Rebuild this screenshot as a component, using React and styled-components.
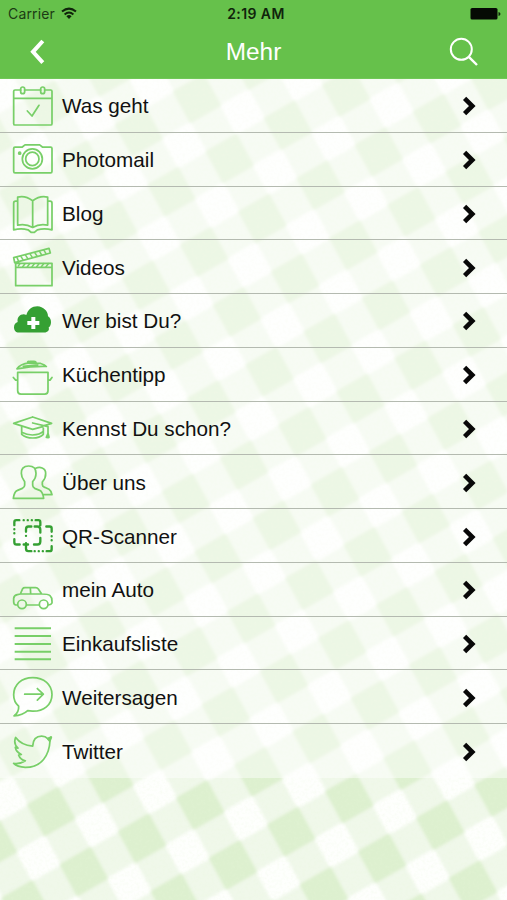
import React from "react";
import styled, { createGlobalStyle } from "styled-components";

const GlobalStyle = createGlobalStyle`
  * { box-sizing: border-box; }
  html, body { margin: 0; padding: 0; }
  body { background: #fff; overflow: hidden; }
`;

const Screen = styled.div`
  position: relative;
  isolation: isolate;
  display: flex;
  flex-direction: column;
  width: 507px;
  height: 900px;
  overflow: hidden;
  color: #111;
  font-family: "Liberation Sans", Arial, sans-serif;
`;

const Backdrop = styled.svg`
  position: absolute;
  inset: 0;
  z-index: -1;
  width: 507px;
  height: 900px;
`;

const Header = styled.header`
  flex: none;
  height: 79px;
  background: #66c14b;
  border-bottom: 1px solid #70c857;
`;

const StatusBar = styled.div`
  display: grid;
  grid-template-columns: 1fr auto 1fr;
  align-items: center;
  height: 27px;
  padding: 0 6px 0 8px;
  font-family: Inter, sans-serif;
  font-size: 14px;
  line-height: 27px;
`;

const Carrier = styled.span`
  display: flex;
  align-items: center;
  gap: 6px;
  color: #1c3b14;
  letter-spacing: 0.15px;
`;

const Clock = styled.span`
  padding-left: 3px;
  font-weight: 600;
  font-size: 14px;
  color: #10240b;
  letter-spacing: 0.4px;
`;

const BatteryIcon = styled.svg`
  justify-self: end;
  width: 31px;
  height: 14px;
`;

const WifiIcon = styled.svg`
  width: 16px;
  height: 13px;
`;

const NavBar = styled.nav`
  display: grid;
  grid-template-columns: 76px 1fr 76px;
  align-items: center;
  height: 50px;
`;

const NavButton = styled.button`
  display: flex;
  justify-content: center;
  align-items: center;
  height: 50px;
  padding: 0;
  border: 0;
  background: none;
  color: #fff;

  svg {
    width: 76px;
    height: 50px;
    fill: none;
    stroke: currentColor;
  }
`;

const Title = styled.h1`
  margin: 0;
  color: #fff;
  font-size: 24.4px;
  font-weight: 400;
  line-height: 50px;
  text-align: center;
`;

const List = styled.ul`
  display: grid;
  grid-template-rows: repeat(13, 53.77px);
  flex: none;
  height: 699px;
  margin: 0;
  padding: 0;
  list-style: none;
  background: rgba(255, 255, 255, 0.46);
`;

const Row = styled.li`
  display: grid;
  grid-template-columns: 45px 1fr 14px;
  column-gap: 7px;
  align-items: center;
  padding: 0 31px 0 10px;
  border-bottom: ${(p) => (p.$last ? "0" : "1px solid #b4bab0")};
`;

const RowIcon = styled.svg`
  display: block;
  width: 45px;
  height: 53.77px;
  fill: none;
  stroke: #78cf68;
  stroke-width: 5.2;
  stroke-linecap: round;
  stroke-linejoin: round;
`;

const Label = styled.span`
  padding-top: 1px;
  font-size: 20.7px;
  line-height: 26px;
  white-space: nowrap;
`;

const Chevron = styled.svg`
  width: 14px;
  height: 20px;
  margin-top: 1px;
  fill: none;
  stroke: #080808;
  stroke-width: 4.6;
`;

const DARK = "#35a033";

const items = [
  {
    label: "Was geht",
    top: 3,
    art: (
      <>
        <path d="M62 36H45Q41 36 41 40V137Q41 141 45 141H152Q156 141 156 137V40Q156 36 152 36H136M74 36H122M41 61H156" />
        <rect x="62" y="27" width="12" height="20" rx="6" />
        <rect x="122" y="27" width="12" height="20" rx="6" />
        <path d="M82 99L96 114L117 82" />
      </>
    ),
  },
  {
    label: "Photomail",
    top: 164.3,
    art: (
      <>
        <path d="M45 207H66L75 200H119L128 207H152Q156 207 156 211V279Q156 284 152 284H45Q41 284 41 279V211Q41 207 45 207Z" />
        <circle cx="97" cy="242" r="30" />
        <circle cx="97" cy="242" r="20" />
        <circle cx="59" cy="225" r="3" fill="#78cc69" />
      </>
    ),
  },
  {
    label: "Blog",
    top: 325.6,
    art: (
      <path d="M98 367Q76 350 53 356V440Q78 435 98 447Q118 435 143 440V356Q120 350 98 367V447M53 368H47Q41 368 41 374V454Q64 449 84 454L94 462H103L112 454Q133 449 156 454V374Q156 368 150 368H143" />
    ),
  },
  {
    label: "Videos",
    top: 1,
    art: (
      <>
        <path d="M47 83H156V138H47ZM47 83V71H156V83M44 69L41 54L147 26L151 40Z" />
        <path
          strokeWidth="4.5"
          d="M55 79L60 72M68 81L75 72M82 81L89 72M96 81L103 72M110 81L117 72M124 81L131 72M138 81L145 72M55 63L51 54M69 60L63 51M83 56L77 47M97 53L91 44M111 49L105 40M125 46L119 36M138 42L132 32"
        />
      </>
    ),
  },
  {
    label: "Wer bist Du?",
    top: 162.3,
    art: (
      <>
        <path
          fill={DARK}
          stroke="none"
          d="M57 278C47 278 42 271 42 262C42 253 47 248 53 246C50 231 64 219 79 225C84 208 96 199 112 199C130 200 144 213 144 229C150 233 153 239 153 247C153 254 150 260 146 263C149 271 143 278 133 278Z"
        />
        <path stroke="#fff" strokeWidth="12" strokeLinecap="butt" d="M100 231V267M82 249H118" />
      </>
    ),
  },
  {
    label: "Küchentipp",
    top: 323.6,
    art: (
      <path d="M53 397H144V452Q144 462 134 462H63Q53 462 53 452ZM53 420H47L40 412M144 420H150L156 412M51 386Q60 371 88 368L122 370Q135 374 139 379Q96 378 51 386M83 368Q82 362 90 364H102Q109 364 108 370M70 379L113 374" />
    ),
  },
  {
    label: "Kennst Du schon?",
    top: 5,
    art: (
      <path d="M98 50L155 69L133 76M128 79L98 87L41 69L98 50M65 79V102Q78 113 98 113Q119 113 130 102V83M65 96Q81 104 97 104Q120 103 130 93M98 68L144 79V112M139 111L144 99L147 111Z" />
    ),
  },
  {
    label: "Über uns",
    top: 166,
    art: (
      <path d="M86 199C70 199 63 209 64 221C64 234 69 239 74 246V257Q74 263 67 266L51 273Q43 276 40 296H131Q128 276 119 272L104 266Q98 262 98 257V246C106 238 108 230 108 221C108 208 101 199 86 199M107 206C119 200 137 204 137 221C138 234 133 240 127 247V255Q127 260 134 263L147 269Q153 273 156 285H130" />
    ),
  },
  {
    label: "QR-Scanner",
    top: 327.5,
    art: (
      <g stroke={DARK} strokeWidth="7">
        <path d="M43 376V367Q43 361 49 361H58M107 361H115Q121 361 121 367V376M43 418V427Q43 434 50 434H59M78 396V388Q78 380 85 380H94M104 380H112Q121 380 121 390V398M102 434H112Q121 434 121 425V414M139 380H149Q155 380 155 386V396M155 439V448Q155 454 149 454H140M78 430V447Q78 454 85 454H94M71 434H84" />
        <path strokeDasharray="0.2 12" d="M71 361H97M43 388V408M155 409V430M104 454H132M78 408V420" />
      </g>
    ),
  },
  {
    label: "mein Auto",
    top: 9,
    art: (
      <>
        <path d="M51 135H47Q41 133 41 125V115Q42 106 52 104L61 102L68 86Q70 83 75 83H107Q112 83 115 87L125 102Q144 102 150 107Q156 112 156 124V129Q154 134 145 135M80 135H116M61 102H125M91 84L92 101" />
        <circle cx="66" cy="133" r="13" />
        <circle cx="131" cy="133" r="13" />
      </>
    ),
  },
  {
    label: "Einkaufsliste",
    top: 170,
    art: <path strokeWidth="6" strokeLinecap="butt" d="M44 204H153M44 227H153M44 251H153M44 274H153M44 297H153" />,
  },
  {
    label: "Weitersagen",
    top: 7.4,
    art: (
      <path d="M42 145Q57 135 56 116C46 108 41 96 41 82C41 51 65 30 98 30C132 30 156 51 156 81C156 112 131 132 97 131L83 129Q68 143 42 145ZM74 80H130M112 63L130 80L112 98" />
    ),
  },
  {
    label: "Twitter",
    top: 168.7,
    art: (
      <>
        <path d="M47 209C58 224 75 233 98 235C99 216 108 205 125 205C134 205 139 208 144 213L154 208L150 219C148 262 125 299 76 299C61 298 48 294 41 287C53 289 65 286 76 279C66 277 59 270 56 262L64 260C53 255 47 247 46 239L54 241C44 232 42 221 47 209Z" />
        <path fill="#78cc69" d="M143 213L153 208L149 220Z" />
      </>
    ),
  },
];

/* Slanted gingham cloth with a fine weave over it. */
function Gingham() {
  return (
    <Backdrop viewBox="0 0 507 900" preserveAspectRatio="none" aria-hidden="true">
      <defs>
        <pattern
          id="check"
          width="100"
          height="100"
          patternUnits="userSpaceOnUse"
          patternTransform="matrix(0.582 -0.333 0.327 0.6 233 865)"
        >
          <rect width="100" height="100" fill="#f0f8ea" />
          <rect x="25" y="25" width="50" height="50" fill="#fefffd" />
          <rect width="27" height="27" fill="#ddf0cf" />
          <rect x="73" width="27" height="27" fill="#ddf0cf" />
          <rect y="73" width="27" height="27" fill="#ddf0cf" />
          <rect x="73" y="73" width="27" height="27" fill="#ddf0cf" />
        </pattern>
        <filter id="soften" x="0" y="0" width="100%" height="100%">
          <feGaussianBlur stdDeviation="1.6" />
        </filter>
        <filter id="weave" x="0" y="0" width="100%" height="100%">
          <feTurbulence type="fractalNoise" baseFrequency="0.35" numOctaves="2" seed="4" />
          <feColorMatrix values="0 0 0 0 0.8  0 0 0 0 0.92  0 0 0 0 0.7  0 0.9 0 0 -0.37" />
        </filter>
      </defs>
      <rect x="-10" y="-10" width="527" height="920" fill="url(#check)" filter="url(#soften)" />
      <rect width="507" height="900" filter="url(#weave)" opacity="0.5" />
    </Backdrop>
  );
}

export default function App() {
  return (
    <>
      <GlobalStyle />
      <Screen>
        <Gingham />
        <Header>
          <StatusBar>
            <Carrier>
              Carrier
              <WifiIcon viewBox="0 0 16 13" fill="none" stroke="#10240b" strokeWidth="2">
                <path d="M1 4.6Q8 -1.4 15 4.6M3.6 7.4Q8 3.6 12.4 7.4" />
                <path d="M5.4 9.2Q8 7 10.6 9.2L8 12Z" fill="#10240b" stroke="none" />
              </WifiIcon>
            </Carrier>
            <Clock>2:19 AM</Clock>
            <BatteryIcon viewBox="0 0 31 14">
              <rect x="0.5" y="1" width="27" height="11.5" rx="1.6" fill="#050a04" />
              <path d="M28.5 5Q30.5 5.5 30.5 7T28.5 9Z" fill="#0d2608" />
            </BatteryIcon>
          </StatusBar>
          <NavBar>
            <NavButton aria-label="Zurück">
              <svg viewBox="0 0 76 50" strokeWidth="4">
                <path d="M42.8 14L33 24.8L42.8 35.6" />
              </svg>
            </NavButton>
            <Title>Mehr</Title>
            <NavButton aria-label="Suchen">
              <svg viewBox="0 0 76 50" strokeWidth="2">
                <circle cx="30.3" cy="22.3" r="10.5" />
                <path d="M37.8 29.8L46 38" strokeWidth="2.4" />
              </svg>
            </NavButton>
          </NavBar>
        </Header>
        <List>
          {items.map((item, i) => (
            <Row key={item.label} $last={i === items.length - 1}>
              <RowIcon viewBox={`30 ${item.top} 135 161.3`}>{item.art}</RowIcon>
              <Label>{item.label}</Label>
              <Chevron viewBox="0 0 14 20">
                <path d="M2.6 2.4L10.3 10L2.6 17.6" />
              </Chevron>
            </Row>
          ))}
        </List>
      </Screen>
    </>
  );
}
